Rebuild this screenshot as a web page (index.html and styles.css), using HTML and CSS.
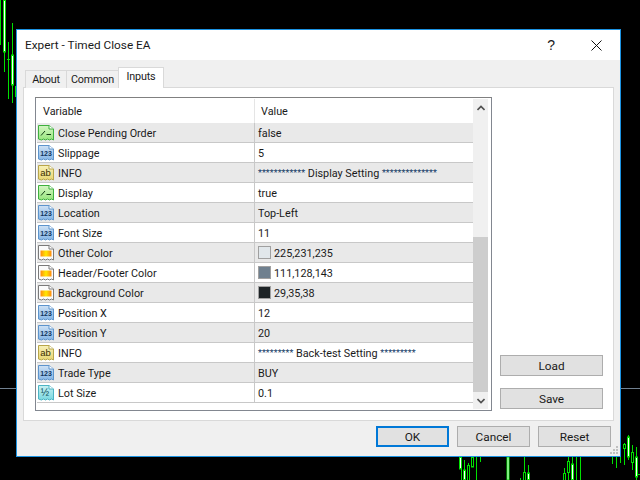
FILE: index.html
```html
<!DOCTYPE html>
<html lang="en">
<head>
<meta charset="utf-8">
<title>Expert - Timed Close EA</title>
<link rel="stylesheet" href="styles.css">
</head>
<body>
<svg class="chart" width="640" height="480" viewBox="0 0 640 480">
  <g class="wick">
    <path d="M0.5 0V45M4.5 0V72M8.5 42V99M12.5 23V103M7 59.5H10M15.5 86V97M16.5 86V97"/>
    <path d="M461.5 457V480M464.5 460V480M468.5 463V480M472.5 457V467M476.5 457V480M480.5 457V462M524.5 457V480M528.5 465V480M520.5 478V480M564.5 468V480M568.5 457V480M572.5 457V480M576.5 457V480M580.5 457V480"/>
    <path d="M612.5 457V464M616.5 457V468M620.5 457V463M624.5 443V465M628.5 435V460M632.5 445V470M636.5 447V480M638 474.5H640"/>
  </g>
  <g class="body">
    <rect x="3.5" y="0" width="2" height="52"/>
    <rect x="11.5" y="55" width="2" height="30"/>
    <rect x="459.5" y="457" width="2" height="12"/>
    <rect x="463.5" y="470" width="2" height="10"/>
    <rect x="507" y="457" width="2" height="23"/>
    <rect x="527.5" y="473" width="2" height="7"/>
    <rect x="571.5" y="464" width="2" height="16"/>
    <rect x="627.5" y="437" width="2" height="20"/>
    <rect x="635.5" y="457" width="2" height="20"/>
  </g>
  <g class="hollow">
    <rect x="467.5" y="465.5" width="2" height="15"/>
    <rect x="471.5" y="457" width="2" height="10"/>
    <rect x="523.5" y="472.5" width="2" height="8"/>
    <rect x="563.5" y="473.5" width="2" height="7"/>
    <rect x="567.5" y="461.5" width="2" height="11"/>
    <rect x="623.5" y="444.5" width="2" height="4"/>
    <rect x="631.5" y="452.5" width="2" height="10"/>
  </g>
  <path class="level" d="M0 388.5H640"/>
</svg>

<svg class="defs" width="0" height="0" aria-hidden="true">
  <defs>
    <linearGradient id="gGreen" x1="0" y1="0" x2="0" y2="1"><stop offset="0" stop-color="#d4f6c4"/><stop offset="1" stop-color="#98e67e"/></linearGradient>
    <linearGradient id="gBlue" x1="0" y1="0" x2="0" y2="1"><stop offset="0" stop-color="#cfe2f5"/><stop offset="1" stop-color="#85b6e6"/></linearGradient>
    <linearGradient id="gYellow" x1="0" y1="0" x2="0" y2="1"><stop offset="0" stop-color="#f8f1b8"/><stop offset="1" stop-color="#e8d674"/></linearGradient>
    <linearGradient id="gCyan" x1="0" y1="0" x2="0" y2="1"><stop offset="0" stop-color="#c6f0f2"/><stop offset="1" stop-color="#7ad8e0"/></linearGradient>
    <linearGradient id="gOrange" x1="0" y1="0" x2="1" y2="0"><stop offset="0" stop-color="#ff8a10"/><stop offset=".5" stop-color="#ffe800"/><stop offset="1" stop-color="#ff8a10"/></linearGradient>
    <path id="sheet" d="M.5 1.5H11L15.5 5V16L13.5 15 11.5 16 9.5 15 7.5 16 5.5 15 3.5 16 .5 15Z"/>
    <path id="fold" d="M11 1.5V5H15.5" fill="#fff"/>
    <symbol id="ic-bool" viewBox="0 0 16 17">
      <use href="#sheet" fill="url(#gGreen)" stroke="#3fb03f"/><use href="#fold" stroke="#3fb03f"/>
      <path d="M3 11.5 7 7M8.5 10.5H13" fill="none" stroke="#123d12"/>
    </symbol>
    <symbol id="ic-int" viewBox="0 0 16 17">
      <use href="#sheet" fill="url(#gBlue)" stroke="#5d94cc"/><use href="#fold" stroke="#5d94cc"/>
      <text x="8" y="12" class="ic-text ic-num">123</text>
    </symbol>
    <symbol id="ic-str" viewBox="0 0 16 17">
      <use href="#sheet" fill="url(#gYellow)" stroke="#b8a64a"/><use href="#fold" stroke="#b8a64a"/>
      <text x="7.5" y="12" class="ic-text ic-ab">ab</text>
    </symbol>
    <symbol id="ic-col" viewBox="0 0 16 17">
      <use href="#sheet" fill="#fbfbfb" stroke="#7a7a7a"/><use href="#fold" stroke="#7a7a7a"/>
      <rect x="2.5" y="6.5" width="11" height="6" fill="url(#gOrange)"/>
    </symbol>
    <symbol id="ic-dbl" viewBox="0 0 16 17">
      <use href="#sheet" fill="url(#gCyan)" stroke="#4db4c4"/><use href="#fold" stroke="#4db4c4"/>
      <text x="7" y="11.5" class="ic-text ic-half">½</text>
    </symbol>
  </defs>
</svg>

<section class="dialog">
  <header class="titlebar">
    <span class="title">Expert - Timed Close EA</span>
    <span class="help">?</span>
    <svg class="close" width="11" height="11" viewBox="0 0 11 11"><path d="M.5 .5 10.5 10.5M10.5 .5 .5 10.5"/></svg>
  </header>
  <div class="tabs">
    <span class="tab">About</span>
    <span class="tab tab-common">Common</span>
    <span class="tab tab-active">Inputs</span>
  </div>
  <div class="panel">
    <div class="list">
      <div class="rows">
        <div class="head"><span class="cell-var">Variable</span><span class="cell-val">Value</span></div>
        <div class="row"><span class="var"><svg class="icon"><use href="#ic-bool"/></svg>Close Pending Order</span><span class="val">false</span></div>
        <div class="row"><span class="var"><svg class="icon"><use href="#ic-int"/></svg>Slippage</span><span class="val">5</span></div>
        <div class="row"><span class="var"><svg class="icon"><use href="#ic-str"/></svg>INFO</span><span class="val"><span class="stars">************</span> Display Setting <span class="stars">**************</span></span></div>
        <div class="row"><span class="var"><svg class="icon"><use href="#ic-bool"/></svg>Display</span><span class="val">true</span></div>
        <div class="row"><span class="var"><svg class="icon"><use href="#ic-int"/></svg>Location</span><span class="val">Top-Left</span></div>
        <div class="row"><span class="var"><svg class="icon"><use href="#ic-int"/></svg>Font Size</span><span class="val">11</span></div>
        <div class="row"><span class="var"><svg class="icon"><use href="#ic-col"/></svg>Other Color</span><span class="val"><i class="swatch sw-other"></i>225,231,235</span></div>
        <div class="row"><span class="var"><svg class="icon"><use href="#ic-col"/></svg>Header/Footer Color</span><span class="val"><i class="swatch sw-head"></i>111,128,143</span></div>
        <div class="row"><span class="var"><svg class="icon"><use href="#ic-col"/></svg>Background Color</span><span class="val"><i class="swatch sw-back"></i>29,35,38</span></div>
        <div class="row"><span class="var"><svg class="icon"><use href="#ic-int"/></svg>Position X</span><span class="val">12</span></div>
        <div class="row"><span class="var"><svg class="icon"><use href="#ic-int"/></svg>Position Y</span><span class="val">20</span></div>
        <div class="row"><span class="var"><svg class="icon"><use href="#ic-str"/></svg>INFO</span><span class="val"><span class="stars">*********</span> Back-test Setting <span class="stars">*********</span></span></div>
        <div class="row"><span class="var"><svg class="icon"><use href="#ic-int"/></svg>Trade Type</span><span class="val">BUY</span></div>
        <div class="row"><span class="var"><svg class="icon"><use href="#ic-dbl"/></svg>Lot Size</span><span class="val">0.1</span></div>
      </div>
      <div class="scrollbar">
        <div class="arrow"><svg width="8" height="6" viewBox="0 0 8 6"><path d="M.5 5 4 1.5 7.5 5"/></svg></div>
        <div class="track"><div class="thumb"></div></div>
        <div class="arrow"><svg width="8" height="6" viewBox="0 0 8 6"><path d="M.5 1 4 4.5 7.5 1"/></svg></div>
      </div>
    </div>
    <div class="side">
      <button class="btn btn-side" type="button">Load</button>
      <button class="btn btn-side" type="button">Save</button>
    </div>
  </div>
  <footer class="footer">
    <button class="btn btn-main btn-default" type="button">OK</button>
    <button class="btn btn-main" type="button">Cancel</button>
    <button class="btn btn-main" type="button">Reset</button>
    <svg class="grip" width="10" height="10" viewBox="0 0 10 10"><path d="M7 0H9V2H7ZM4 3H6V5H4ZM7 3H9V5H7ZM1 6H3V8H1ZM4 6H6V8H4ZM7 6H9V8H7Z"/></svg>
  </footer>
</section>
</body>
</html>
```

FILE: styles.css
```css
* { box-sizing: border-box; }
html, body { margin: 0; height: 100%; }
body {
  background: #000;
  overflow: hidden;
  font-family: "Roboto", "Liberation Sans", sans-serif;
  font-size: 10.8px;
  color: #1a1a1a;
}
.chart { position: absolute; left: 0; top: 0; }
.defs { position: absolute; }
.wick { fill: none; stroke: #00e000; stroke-width: 1; }
.body rect { fill: #fff; stroke: #00e000; }
.hollow rect { fill: #000; stroke: #00e000; }
.level { stroke: #708090; fill: none; }

.dialog {
  position: absolute;
  left: 16px;
  top: 29px;
  width: 605px;
  height: 428px;
  background: #f0f0f0;
  border: 1px solid #1c93e2;
  display: flex;
  flex-direction: column;
}
.titlebar {
  height: 30px;
  background: #fff;
  display: flex;
  align-items: center;
  padding: 0 18px 0 8px;
  flex: none;
}
.title { flex: 1; font-size: 11.8px; }
.help { font-family: "Liberation Sans", sans-serif; font-size: 14px; margin-right: 36px; }
.close { flex: none; }
.close path { stroke: #111; fill: none; }

.tabs {
  height: 27px;
  flex: none;
  display: flex;
  align-items: flex-end;
  padding-left: 8px;
  position: relative;
  z-index: 1;
  letter-spacing: -0.2px;
}
.tab {
  width: 42px;
  height: 18px;
  margin-bottom: -1px;
  background: #f0f0f0;
  border: 1px solid #d9d9d9;
  border-bottom: 0;
  display: flex;
  align-items: center;
  justify-content: center;
}
.tab-common { width: 53px; margin-left: -1px; }
.tab-active {
  width: 46px;
  height: 21px;
  background: #fff;
  margin-left: -1px;
  padding-bottom: 3px;
}

.panel {
  height: 334px;
  flex: none;
  margin: 0 6px;
  background: #fff;
  border: 1px solid #d9d9d9;
  padding: 9px 11px;
  display: flex;
}
.list {
  width: 457px;
  height: 314px;
  flex: none;
  border: 1px solid #828790;
  border-top-color: #808080;
  background: #fff;
  display: flex;
}
.rows { width: 437px; flex: none; }
.head {
  height: 25px;
  display: flex;
  align-items: center;
  background: #fff;
}
.cell-var { width: 219px; padding: 2px 0 0 7px; border-right: 1px solid #e5e5e5; height: 24px; display: flex; align-items: center; }
.cell-val { padding: 2px 0 0 6px; }
.row {
  height: 20px;
  margin-left: 1px;
  display: flex;
  align-items: stretch;
  border-bottom: 1px solid #c8c8c8;
  background: #fff;
}
.row:nth-child(even) { background: #e9e9e9; }
.var {
  width: 218px;
  flex: none;
  display: flex;
  align-items: center;
  padding: 2px 0 0 1px;
  gap: 4px;
  border-right: 1px solid #c8c8c8;
  white-space: nowrap;
}
.val {
  display: flex;
  align-items: center;
  padding: 2px 0 0 3px;
  white-space: pre;
}
.stars { font-size: 9px; letter-spacing: 0.05px; position: relative; top: -1px; color: #123a66; }
.icon { width: 16px; height: 17px; flex: none; margin-top: -2px; }
.ic-text { text-anchor: middle; font-family: "Liberation Sans", sans-serif; }
.ic-num { font-size: 7px; font-weight: 700; fill: #0f3560; }
.ic-ab { font-size: 9.5px; fill: #3a2e00; }
.ic-half { font-size: 10px; fill: #0a4a55; }
.swatch {
  width: 13px;
  height: 13px;
  display: block;
  border: 1px solid #a0a0a0;
  margin: -2px 3px 0 0;
}
.sw-other { background: rgb(225,231,235); }
.sw-head { background: rgb(111,128,143); }
.sw-back { background: rgb(29,35,38); }

.scrollbar {
  width: 15px;
  margin: 1px 0 1px 0;
  flex: none;
  background: #f0f0f0;
  display: flex;
  flex-direction: column;
}
.arrow {
  height: 17px;
  flex: none;
  display: flex;
  align-items: center;
  justify-content: center;
}
.arrow path { fill: none; stroke: #505050; stroke-width: 1.6; }
.track { flex: 1; display: flex; flex-direction: column; justify-content: flex-end; }
.thumb { height: 155px; background: #cdcdcd; }

.side {
  width: 103px;
  flex: none;
  margin-left: 8px;
  padding-bottom: 2px;
  display: flex;
  flex-direction: column;
  justify-content: flex-end;
  gap: 12px;
}
.btn {
  font: inherit;
  font-size: 11.8px;
  color: #1a1a1a;
  height: 21px;
  background: #e1e1e1;
  border: 1px solid #adadad;
  padding: 0;
  margin: 0;
}
.btn-main { width: 73px; }
.btn-default { border: 2px solid #0078d7; }
.footer {
  flex: 1;
  position: relative;
  display: flex;
  justify-content: flex-end;
  align-items: flex-start;
  gap: 8px;
  padding: 5px 9px 0 0;
}
.grip { position: absolute; right: 1px; bottom: 0; fill: #c0c0c0; }
```
